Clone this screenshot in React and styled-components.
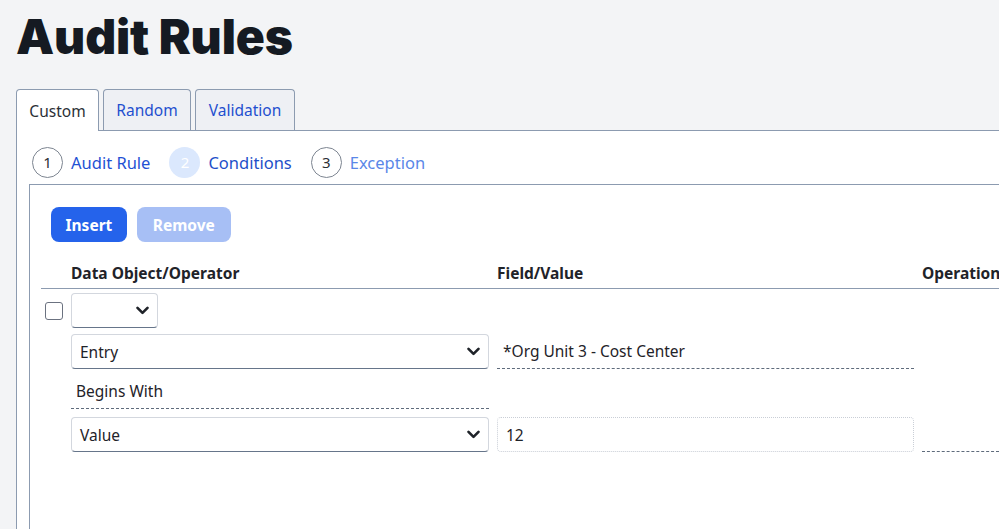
import React from "react";
import styled, { createGlobalStyle } from "styled-components";

const GlobalStyle = createGlobalStyle`
  html, body, #root {
    height: 100%;
  }
  body {
    margin: 0;
    background: #f3f4f6;
    font-family: "Noto Sans", "Open Sans", sans-serif;
    color: #1f2937;
    overflow: hidden;
  }
`;

const Page = styled.div`
  height: 100%;
  display: flex;
  flex-direction: column;
  padding-left: 16px;
  box-sizing: border-box;
`;

const Title = styled.h1`
  margin: 0;
  padding-top: 9px;
  height: 80px;
  box-sizing: border-box;
  font-family: Inter, sans-serif;
  font-weight: 900;
  font-size: 48px;
  line-height: 56px;
  letter-spacing: -0.1px;
  color: #151a22;
`;

const TabBar = styled.div`
  display: flex;
  gap: 4px;
  margin-top: 9px;
  border-bottom: 1px solid #8c9bb0;
`;

const Tab = styled.div`
  width: ${(p) => p.w}px;
  box-sizing: border-box;
  display: flex;
  align-items: center;
  justify-content: center;
  border: 1px solid #8c9bb0;
  border-bottom: none;
  border-radius: 4px 4px 0 0;
  font-size: 15.5px;
  background: ${(p) => (p.active ? "#ffffff" : "#eef0f4")};
  color: ${(p) => (p.active ? "#2b2f36" : "#1f4fcf")};
  margin-bottom: ${(p) => (p.active ? "-1px" : "0")};
  height: ${(p) => (p.active ? "42px" : "41px")};
`;

const Content = styled.div`
  flex: 1;
  background: #ffffff;
  border-left: 1px solid #8c9bb0;
  padding-left: 12px;
  display: flex;
  flex-direction: column;
`;

const Steps = styled.div`
  display: flex;
  align-items: center;
  height: 53px;
  box-sizing: border-box;
  padding: 9px 0 0 3px;
`;

const Step = styled.div`
  display: flex;
  align-items: center;
  gap: 8px;
  margin-right: 19px;
  font-size: 16.5px;
  color: ${(p) => p.color};
`;

const StepCircle = styled.span`
  width: 31px;
  height: 31px;
  box-sizing: border-box;
  border-radius: 50%;
  display: flex;
  align-items: center;
  justify-content: center;
  font-size: 15px;
  border: ${(p) => (p.current ? "none" : "1px solid #7d8591")};
  background: ${(p) => (p.current ? "#dbe8fd" : "#ffffff")};
  color: ${(p) => (p.current ? "#ffffff" : "#2b2f36")};
`;

const Panel = styled.div`
  flex: 1;
  border-top: 1px solid #8c9bb0;
  border-left: 1px solid #8c9bb0;
  padding: 22px 0 0 11px;
`;

const Toolbar = styled.div`
  display: flex;
  gap: 10px;
  padding-left: 10px;
`;

const Button = styled.button`
  height: 35px;
  padding: 0 ${(p) => (p.disabled ? 16 : 14.5)}px;
  border: none;
  border-radius: 8px;
  font-family: "Noto Sans", "Open Sans", sans-serif;
  font-weight: 700;
  font-size: 15.5px;
  color: #ffffff;
  background: ${(p) => (p.disabled ? "#a7bff5" : "#2563eb")};
`;

const Table = styled.div`
  margin-top: 21px;
`;

const Row = styled.div`
  display: grid;
  grid-template-columns: 18px 418px 417px 1fr;
  column-gap: 8px;
  align-items: center;
  padding-left: 4px;
  margin-top: ${(p) => p.top || 0}px;
`;

const HeaderRow = styled(Row)`
  height: 25px;
  align-items: start;
  border-bottom: 1px solid #8c9bb0;
`;

const HeadCell = styled.div`
  grid-column: ${(p) => p.col};
  font-weight: 700;
  font-size: 15.5px;
  line-height: 20px;
  color: #1f2329;
  white-space: nowrap;
`;

const Checkbox = styled.span`
  width: 18px;
  height: 18px;
  box-sizing: border-box;
  border: 1.5px solid #6b7280;
  border-radius: 3px;
  background: #fff;
`;

const Select = styled.div`
  grid-column: 2;
  width: ${(p) => (p.small ? "87px" : "auto")};
  height: 35px;
  box-sizing: border-box;
  display: flex;
  align-items: center;
  justify-content: space-between;
  padding: 0 8px;
  border: 1px solid #d3d7de;
  border-bottom: 1.5px solid #66758a;
  border-radius: 4px;
  font-size: 15.5px;
  color: #1f2329;
  background: #fff;
`;

const ReadField = styled.div`
  grid-column: ${(p) => p.col};
  height: ${(p) => p.h || 35}px;
  box-sizing: border-box;
  display: flex;
  align-items: center;
  padding-left: ${(p) => p.pl || 6}px;
  border-bottom: 1px dashed #5f6b7c;
  font-size: 15.5px;
  color: #1f2329;
`;

const TextInput = styled.div`
  grid-column: 3;
  height: 35px;
  box-sizing: border-box;
  display: flex;
  align-items: center;
  padding-left: 8px;
  border: 1px dotted #c9ced6;
  border-radius: 4px;
  font-size: 15.5px;
  color: #1f2329;
`;

const Chevron = () => (
  <svg width="13" height="9" viewBox="0 0 13 9">
    <path d="M1.5 1.8 L6.5 6.8 L11.5 1.8" fill="none" stroke="#1f2329" strokeWidth="2.6" strokeLinecap="round" strokeLinejoin="round" />
  </svg>
);

const App = () => {
  return (
    <>
      <GlobalStyle />
      <Page>
        <Title>Audit Rules</Title>
        <TabBar>
          <Tab w={83} active>Custom</Tab>
          <Tab w={88}>Random</Tab>
          <Tab w={100}>Validation</Tab>
        </TabBar>
        <Content>
          <Steps>
            <Step color="#1f51d4">
              <StepCircle>1</StepCircle>
              Audit Rule
            </Step>
            <Step color="#1e4fc9">
              <StepCircle current>2</StepCircle>
              Conditions
            </Step>
            <Step color="#5a87e8">
              <StepCircle>3</StepCircle>
              Exception
            </Step>
          </Steps>
          <Panel>
            <Toolbar>
              <Button>Insert</Button>
              <Button disabled>Remove</Button>
            </Toolbar>
            <Table>
              <HeaderRow>
                <HeadCell col={2}>Data Object/Operator</HeadCell>
                <HeadCell col={3}>Field/Value</HeadCell>
                <HeadCell col={4}>Operation</HeadCell>
              </HeaderRow>
              <Row top={4}>
                <Checkbox />
                <Select small>
                  <span />
                  <Chevron />
                </Select>
              </Row>
              <Row top={6}>
                <Select>
                  Entry
                  <Chevron />
                </Select>
                <ReadField col={3}>*Org Unit 3 - Cost Center</ReadField>
              </Row>
              <Row top={5}>
                <ReadField col={2} h={35} pl={5}>Begins With</ReadField>
              </Row>
              <Row top={8}>
                <Select>
                  Value
                  <Chevron />
                </Select>
                <TextInput>12</TextInput>
                <ReadField col={4} />
              </Row>
            </Table>
          </Panel>
        </Content>
      </Page>
    </>
  );
};

export default App;
